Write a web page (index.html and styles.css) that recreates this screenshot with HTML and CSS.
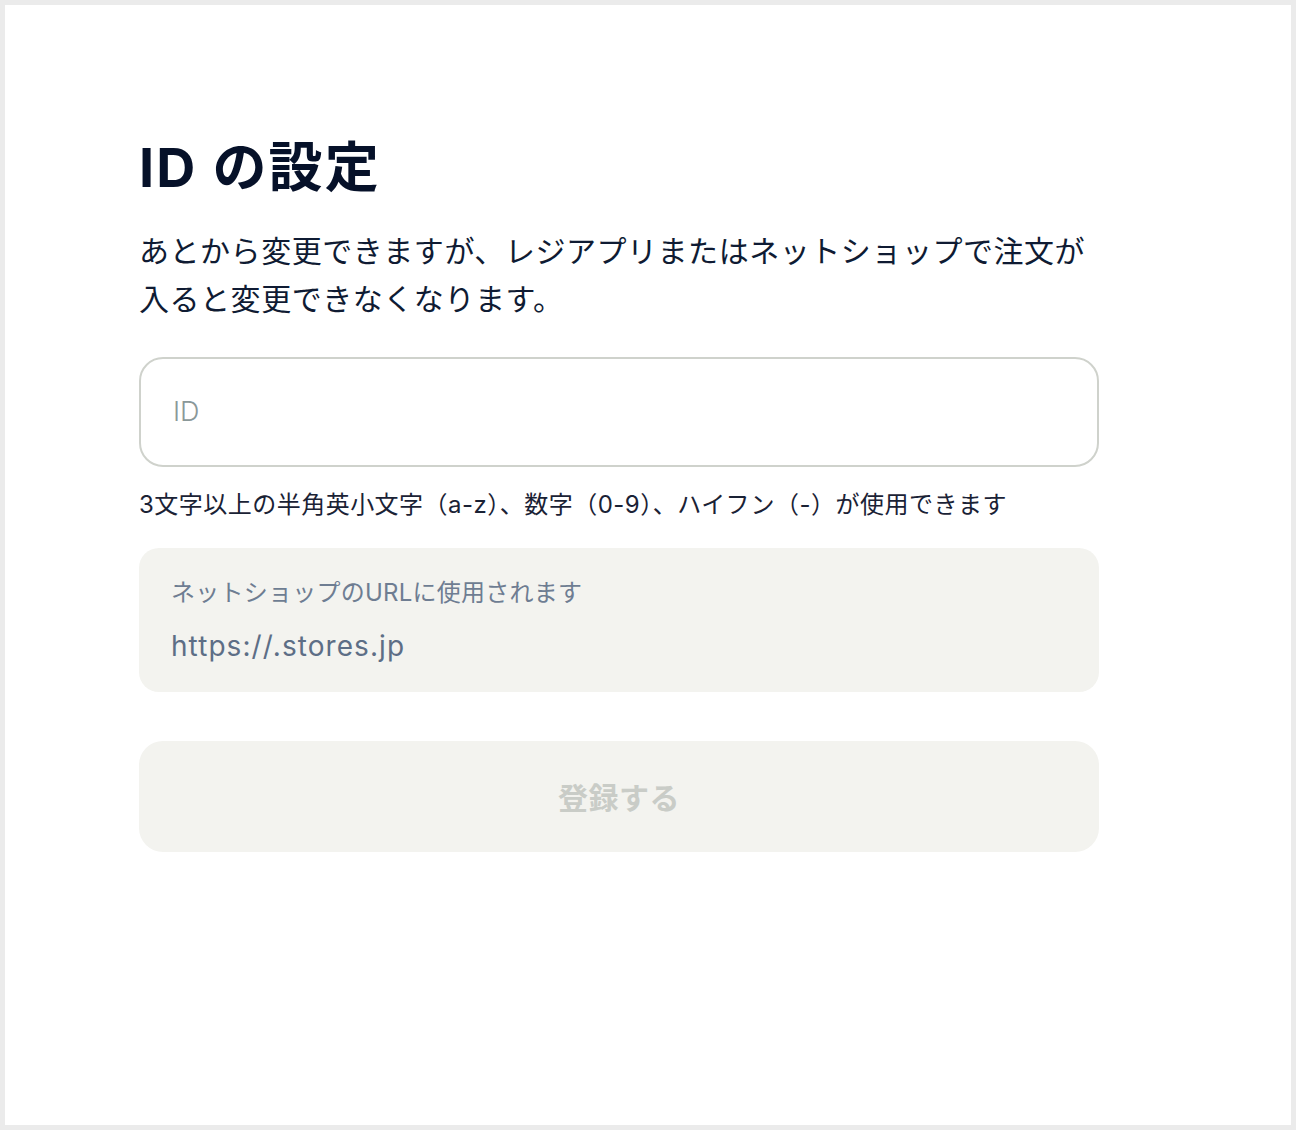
FILE: index.html
```html
<!DOCTYPE html>
<html lang="ja">
<head>
    <meta charset="UTF-8">
    <meta name="viewport" content="width=device-width, initial-scale=1.0">
    <title>ID の設定</title>
    <link rel="stylesheet" href="styles.css">
</head>
<body>
    <div class="frame">
        <div class="content">
            <h1>ID の設定</h1>
            <p class="lead">あとから変更できますが、レジアプリまたはネットショップで注文が<br>入ると変更できなくなります。</p>
            <input type="text" class="id-input" placeholder="ID">
            <p class="hint">3文字以上の半角英小文字（a-z）、数字（0-9）、ハイフン（-）が使用できます</p>
            <div class="url-box">
                <div class="url-label">ネットショップのURLに使用されます</div>
                <div class="url-value">https://.stores.jp</div>
            </div>
            <button class="submit" disabled>登録する</button>
        </div>
    </div>
</body>
</html>
```

FILE: styles.css
```css
html, body {
    margin: 0;
    padding: 0;
    background: #ffffff;
}
body {
    font-family: "Inter", "Noto Sans CJK JP", sans-serif;
    color: #0f1b33;
    letter-spacing: 0.015em;
}
.frame {
    height: 1130px;
    box-sizing: border-box;
    border: 5px solid #ebebeb;
    padding: 125px 0 0 134px;
}
.content {
    width: 960px;
}
h1 {
    margin: 0;
    font-size: 54px;
    line-height: 1.4;
    font-weight: 700;
    letter-spacing: 0.04em;
    color: #061129;
}
.lead {
    margin: 21px 0 0;
    font-size: 30px;
    line-height: 48px;
    letter-spacing: 0.018em;
}
.id-input {
    display: block;
    width: 100%;
    height: 110px;
    box-sizing: border-box;
    margin-top: 34px;
    padding: 0 32px;
    border: 2px solid #cfd2cc;
    border-radius: 24px;
    font-family: inherit;
    font-size: 27px;
    color: #0f1b33;
    outline: none;
}
.id-input::placeholder {
    color: #8a9899;
    font-weight: 300;
}
.hint {
    margin: 20px 0 0;
    font-size: 24px;
    line-height: 36px;
    letter-spacing: 0.02em;
    color: #1a2235;
}
.url-box {
    margin-top: 25px;
    height: 144px;
    box-sizing: border-box;
    padding: 28px 32px 0;
    background: #f3f3ef;
    border-radius: 20px;
}
.url-label {
    font-size: 24px;
    line-height: 34px;
    color: #6e7d92;
}
.url-value {
    margin-top: 16px;
    font-size: 28px;
    line-height: 40px;
    letter-spacing: 0.038em;
    color: #5d6e86;
}
.submit {
    display: block;
    width: 100%;
    height: 111px;
    margin-top: 49px;
    border: none;
    border-radius: 24px;
    background: #f3f3ef;
    font-family: inherit;
    font-size: 30px;
    font-weight: 700;
    letter-spacing: 0.015em;
    color: #c9ccc7;
}
```
